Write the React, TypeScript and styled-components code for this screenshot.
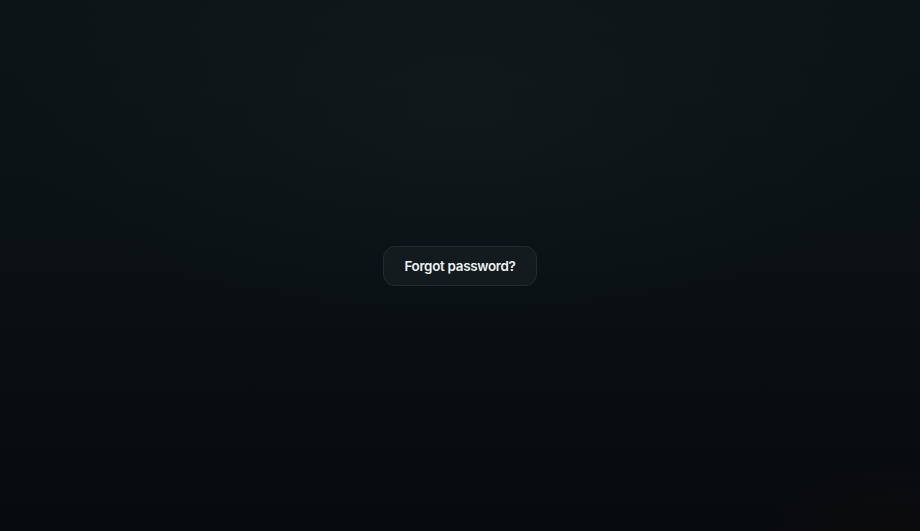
import { createGlobalStyle, styled } from 'styled-components';

const GlobalStyle = createGlobalStyle`
  html, body {
    margin: 0;
    height: 100%;
    background: #0a0f12;
  }
  #root {
    height: 100%;
  }
`;

const Page = styled.div`
  height: 100%;
  min-height: 531px;
  display: flex;
  align-items: center;
  justify-content: center;
  font-family: Inter, 'Noto Sans', sans-serif;
  background:
    radial-gradient(ellipse 70% 60% at 50% 20%, rgba(22, 32, 36, 0.45), transparent 70%),
    radial-gradient(ellipse 30% 25% at 100% 100%, rgba(30, 12, 12, 0.2), transparent 70%),
    linear-gradient(180deg, #0d1417 0%, #0a1013 50%, #070b0e 100%);
`;

const LinkButton = styled.button`
  width: 154px;
  height: 40px;
  padding: 0;
  margin-top: 1px;
  border-radius: 12px;
  border: 1px solid #222c30;
  background: #131b1e;
  color: #eef1f2;
  font-family: inherit;
  font-size: 13.4px;
  font-weight: 600;
  letter-spacing: -0.3px;
  cursor: pointer;

  &:hover {
    background: #172125;
  }
`;

export default function App() {
  return (
    <>
      <GlobalStyle />
      <Page>
        <LinkButton type="button">Forgot password?</LinkButton>
      </Page>
    </>
  );
}
